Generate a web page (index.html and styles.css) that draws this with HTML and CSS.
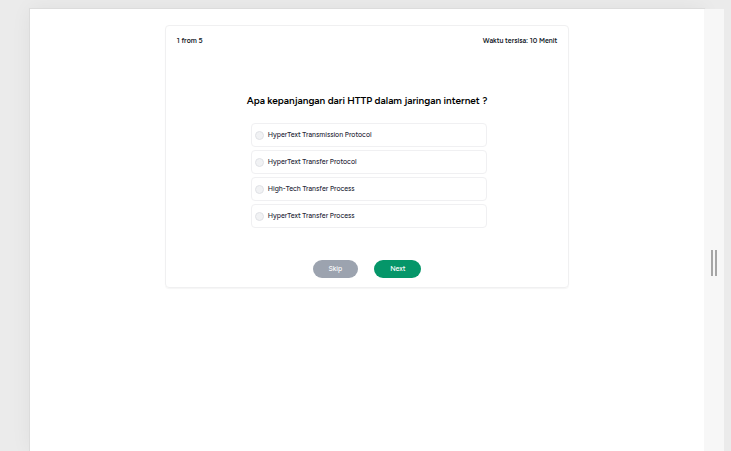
FILE: index.html
```html
<!DOCTYPE html>
<html lang="id">
<head>
<meta charset="utf-8">
<meta name="viewport" content="width=device-width, initial-scale=1">
<title>Quiz</title>
<link rel="stylesheet" href="styles.css">
</head>
<body>
<div class="workspace">
  <main class="page">
    <form class="quiz">
      <header class="quiz-header">
        <span>1 from 5</span>
        <span>Waktu tersisa: 10 Menit</span>
      </header>
      <h1 class="question" id="question">Apa kepanjangan dari HTTP dalam jaringan internet ?</h1>
      <div class="options" role="radiogroup" aria-labelledby="question">
        <label class="option"><input type="radio" name="answer">HyperText Transmission Protocol</label>
        <label class="option"><input type="radio" name="answer">HyperText Transfer Protocol</label>
        <label class="option"><input type="radio" name="answer">High-Tech Transfer Process</label>
        <label class="option"><input type="radio" name="answer">HyperText Transfer Process</label>
      </div>
      <div class="actions">
        <button class="button skip" type="button">Skip</button>
        <button class="button next" type="button">Next</button>
      </div>
    </form>
  </main>
  <div class="resizer" role="separator" aria-orientation="vertical">
    <span class="grip"></span>
  </div>
</div>
</body>
</html>
```
FILE: styles.css
```css
* {
  box-sizing: border-box;
}

body {
  margin: 0;
  background: #ebebeb;
  font-family: Figtree, Lato, "Open Sans", sans-serif;
  font-size: 7px;
  line-height: 10px;
  color: #111827;
}

.workspace {
  display: flex;
  min-height: 100vh;
  padding: 9px 7px 0 30px;
  overflow: hidden;
}

.page {
  flex: 1;
  padding-top: 16px;
  background: #fff;
  box-shadow: 0 0 0 1px #dcdcdc, 0 0 20px rgba(0, 0, 0, 0.06);
}

.quiz {
  width: 60%;
  margin: 0 auto;
  padding: 10px 11px 9px;
  border: 1px solid #f0f0f1;
  border-radius: 4px;
  box-shadow: 0 1px 1px rgba(0, 0, 0, 0.04);
}

.quiz-header {
  display: flex;
  justify-content: space-between;
  font-weight: 600;
}

.question {
  margin: 48px 0 15px;
  font-size: 10px;
  line-height: 14px;
  font-weight: 600;
  text-align: center;
  color: #000;
}

.options {
  display: grid;
  gap: 3px;
  margin: 0 70px 0 74px;
}

.option {
  display: flex;
  align-items: center;
  gap: 4px;
  height: 24px;
  padding: 0 3px;
  border: 1px solid #f0f0f2;
  border-radius: 4px;
  font-weight: 500;
  color: #1f2937;
}

.option input {
  appearance: none;
  width: 9px;
  height: 9px;
  margin: 0;
  border: 1px solid #e0e2e6;
  border-radius: 50%;
  background: #f1f2f4;
}

.option input:checked {
  border: 3px solid #059669;
  background: #fff;
}

.actions {
  display: flex;
  justify-content: center;
  gap: 16px;
  margin-top: 32px;
}

.button {
  height: 18px;
  padding: 0 16px;
  border: 0;
  border-radius: 9px;
  font: inherit;
  font-weight: 500;
  color: #fff;
}

.skip {
  background: #9ca3af;
}

.next {
  background: #059669;
}

.resizer {
  display: flex;
  align-items: center;
  justify-content: center;
  width: 20px;
  padding-top: 66px;
  background: #f7f7f7;
  z-index: 1;
  cursor: col-resize;
}

.grip {
  width: 6px;
  height: 26px;
  border: solid #a6a6a6;
  border-width: 0 2px;
}
```
